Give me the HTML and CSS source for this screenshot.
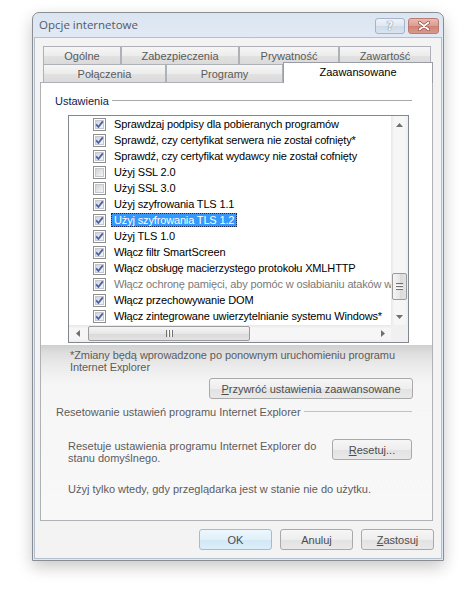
FILE: index.html
```html
<!DOCTYPE html>
<html lang="pl">
<head>
<meta charset="utf-8">
<title>Opcje internetowe</title>
<link rel="stylesheet" href="styles.css">
</head>
<body>
<svg class="defs" width="0" height="0" aria-hidden="true">
  <defs>
    <linearGradient id="cbg" x1="0" y1="0" x2="1" y2="1">
      <stop offset="0" stop-color="#cdd1d7"/>
      <stop offset="1" stop-color="#f7f7f7"/>
    </linearGradient>
    <symbol id="cb" viewBox="0 0 13 13">
      <rect x="0.5" y="0.5" width="12" height="12" fill="#fff" stroke="#8f8f8f"/>
      <rect x="2.5" y="2.5" width="8" height="8" fill="url(#cbg)" stroke="#c4c8ce"/>
    </symbol>
    <symbol id="ck" viewBox="0 0 13 13">
      <use href="#cb"/>
      <path d="M3.2 6.4 L5.4 9 L9.8 3.4" fill="none" stroke="#4a5fa3" stroke-width="1.7" stroke-linejoin="round"/>
    </symbol>
  </defs>
</svg>

<div class="window">
  <div class="titlebar">
    <span class="title">Opcje internetowe</span>
    <div class="caption-btns">
      <span class="cbtn help">?</span>
      <span class="cbtn close">
        <svg width="12" height="10" viewBox="0 0 12 10"><path d="M1.5 1.5 L10.5 8.5 M10.5 1.5 L1.5 8.5" stroke="#8a4a44" stroke-width="3.2" stroke-linecap="round"/><path d="M1.5 1.5 L10.5 8.5 M10.5 1.5 L1.5 8.5" stroke="#fff" stroke-width="1.8" stroke-linecap="round"/></svg>
      </span>
    </div>
  </div>

  <div class="client">
    <div class="tabs">
      <div class="tabrow">
        <div class="tab w-ogolne">Ogólne</div>
        <div class="tab w-zabez">Zabezpieczenia</div>
        <div class="tab w-pryw">Prywatność</div>
        <div class="tab w-zawart">Zawartość</div>
      </div>
      <div class="tabrow">
        <div class="tab w-polacz">Połączenia</div>
        <div class="tab w-prog">Programy</div>
        <div class="tab tab-sel w-zaaw">Zaawansowane</div>
      </div>
    </div>

    <div class="page">
      <div class="panel">
        <div class="group-label"><span class="gl-text navy">Ustawienia</span><span class="gl-line"></span></div>
        <div class="listbox">
          <div class="lb-main">
            <div class="items">
              <div class="item"><svg class="cb"><use href="#ck"/></svg><span class="lbl">Sprawdzaj podpisy dla pobieranych programów</span></div>
              <div class="item"><svg class="cb"><use href="#ck"/></svg><span class="lbl">Sprawdź, czy certyfikat serwera nie został cofnięty*</span></div>
              <div class="item"><svg class="cb"><use href="#ck"/></svg><span class="lbl">Sprawdź, czy certyfikat wydawcy nie został cofnięty</span></div>
              <div class="item"><svg class="cb"><use href="#cb"/></svg><span class="lbl">Użyj SSL 2.0</span></div>
              <div class="item"><svg class="cb"><use href="#cb"/></svg><span class="lbl">Użyj SSL 3.0</span></div>
              <div class="item"><svg class="cb"><use href="#ck"/></svg><span class="lbl">Użyj szyfrowania TLS 1.1</span></div>
              <div class="item"><svg class="cb"><use href="#ck"/></svg><span class="lbl sel">Użyj szyfrowania TLS 1.2</span></div>
              <div class="item"><svg class="cb"><use href="#ck"/></svg><span class="lbl">Użyj TLS 1.0</span></div>
              <div class="item"><svg class="cb"><use href="#ck"/></svg><span class="lbl">Włącz filtr SmartScreen</span></div>
              <div class="item"><svg class="cb"><use href="#ck"/></svg><span class="lbl">Włącz obsługę macierzystego protokołu XMLHTTP</span></div>
              <div class="item"><svg class="cb"><use href="#ck"/></svg><span class="lbl dis">Włącz ochronę pamięci, aby pomóc w osłabianiu ataków w</span></div>
              <div class="item"><svg class="cb"><use href="#ck"/></svg><span class="lbl">Włącz przechowywanie DOM</span></div>
              <div class="item"><svg class="cb"><use href="#ck"/></svg><span class="lbl">Włącz zintegrowane uwierzytelnianie systemu Windows*</span></div>
            </div>
            <div class="vscroll">
              <div class="arrow-btn"><svg width="7" height="4" viewBox="0 0 7 4"><path d="M0 4 L3.5 0 L7 4 Z" fill="#707070"/></svg></div>
              <div class="vtrack">
                <div class="vthumb"><span class="grip-v"></span></div>
              </div>
              <div class="arrow-btn"><svg width="7" height="4" viewBox="0 0 7 4"><path d="M0 0 L3.5 4 L7 0 Z" fill="#707070"/></svg></div>
            </div>
          </div>
          <div class="hscroll">
            <div class="arrow-btn-h"><svg width="4" height="7" viewBox="0 0 4 7"><path d="M4 0 L0 3.5 L4 7 Z" fill="#707070"/></svg></div>
            <div class="htrack">
              <div class="hthumb"><span class="grip-h"></span></div>
            </div>
            <div class="arrow-btn-h"><svg width="4" height="7" viewBox="0 0 4 7"><path d="M0 0 L4 3.5 L0 7 Z" fill="#707070"/></svg></div>
            <div class="corner"></div>
          </div>
        </div>
      </div>

      <div class="lower">
        <p class="note">*Zmiany będą wprowadzone po ponownym uruchomieniu programu<br>Internet Explorer</p>

        <div class="restore-row">
          <span class="btn btn-restore"><u>P</u>rzywróć ustawienia zaawansowane</span>
        </div>

        <div class="group-label gl-reset"><span class="gl-text">Resetowanie ustawień programu Internet Explorer</span><span class="gl-line"></span></div>

        <div class="reset-row">
          <p class="reset-text">Resetuje ustawienia programu Internet Explorer do<br>stanu domyślnego.</p>
          <span class="btn btn-reset"><u>R</u>esetuj...</span>
        </div>

        <p class="use-text">Użyj tylko wtedy, gdy przeglądarka jest w stanie nie do użytku.</p>
      </div>
    </div>

    <div class="buttons">
      <span class="btn btn-dlg btn-default">OK</span>
      <span class="btn btn-dlg">Anuluj</span>
      <span class="btn btn-dlg"><u>Z</u>astosuj</span>
    </div>
  </div>
</div>
</body>
</html>
```

FILE: styles.css
```css
* { box-sizing: border-box; }
html, body { margin: 0; padding: 0; }
body {
  width: 473px;
  height: 593px;
  overflow: hidden;
  background: #ffffff;
  font-family: "Liberation Sans", Arial, sans-serif;
  font-size: 11px;
  color: #5c5c5c;
}
.defs { position: absolute; width: 0; height: 0; overflow: hidden; }
p { margin: 0; }
u { text-decoration: underline; text-underline-offset: 1px; }

.window {
  margin: 12px 0 0 32px;
  width: 412px;
  height: 549px;
  border: 1px solid #8a8d92;
  border-radius: 7px 7px 0 0;
  background: linear-gradient(#dbe5f1, #e4ecf6 40px, #dfe9f5);
  box-shadow: 0 6px 16px rgba(0, 0, 0, 0.22);
  padding: 0 1px 1px 1px;
  display: flex;
  flex-direction: column;
}

.titlebar {
  height: 24px;
  display: flex;
  justify-content: space-between;
  align-items: flex-start;
  padding-left: 5px;
}
.title {
  font-family: "Open Sans", "Noto Sans", sans-serif;
  font-size: 11.5px;
  line-height: 24px;
  color: #52596a;
}
.caption-btns {
  display: flex;
  gap: 3px;
  margin-top: 5px;
  margin-right: 3px;
}
.cbtn {
  height: 16px;
  border-radius: 3px;
  display: flex;
  align-items: center;
  justify-content: center;
}
.help {
  width: 30px;
  border: 1px solid #a4b3c8;
  background: linear-gradient(#eef3f9, #dfe7f1 50%, #cfdbea 51%, #dae4f0);
  font-family: "DejaVu Sans", sans-serif;
  font-size: 12px;
  font-weight: bold;
  color: #f4f7fb;
  text-shadow: 0 0 1px #6b7a90, 0 0 1px #6b7a90;
  line-height: 14px;
}
.close {
  width: 31px;
  border: 1px solid #b97c73;
  background: linear-gradient(#e9b9b0, #dc9c90 50%, #cf8171 51%, #d9998b);
}

.client {
  flex: 1;
  border: 1px solid #b4bfcd;
  background: #f3f3f3;
  padding: 8px 0 0 5px;
  display: flex;
  flex-direction: column;
}

.tabs {
  display: flex;
  flex-direction: column;
  padding-left: 3px;
}
.tabrow {
  display: flex;
  height: 18px;
}
.tab {
  height: 18px;
  border: 1px solid #aeb1b6;
  border-bottom: none;
  background: linear-gradient(#f6f6f6, #ececec 50%, #e2e2e2 51%, #dadada);
  text-align: center;
  line-height: 16px;
  padding-top: 1px;
  color: #5a5a5a;
  white-space: nowrap;
}
.w-ogolne { width: 78px; }
.w-zabez { width: 118px; }
.w-pryw { width: 100px; }
.w-zawart { width: 92px; }
.w-polacz { width: 123px; }
.w-prog { width: 117px; }
.w-zaaw { width: 150px; }
.tab-sel {
  height: 21px;
  margin-top: -2px;
  position: relative;
  z-index: 2;
  background: #ffffff;
  border-color: #9a9da3;
  color: #000;
  line-height: 17px;
  padding-top: 1px;
}

.page {
  width: 393px;
  height: 439px;
  border: 1px solid #aeb1b6;
  background: #ffffff;
  display: flex;
  flex-direction: column;
}

.panel {
  height: 262px;
  padding-top: 5px;
  background: #ffffff;
  display: flex;
  flex-direction: column;
}

.lower {
  flex: 1;
  background: linear-gradient(#cfcfcf, #dedede 8px, #ececec 22px, #f6f6f6 40px, #f8f8f8);
}

.group-label {
  display: flex;
  align-items: flex-start;
  margin-top: 7px;
  padding-left: 14px;
  line-height: 13px;
  height: 13px;
}
.gl-text { white-space: nowrap; padding-right: 3px; }
.navy { color: #15194a; }
.gl-line {
  flex: 1;
  height: 1px;
  margin-top: 5px;
  margin-right: 20px;
  background: #a9a9a9;
}

.listbox {
  margin: 7px 0 0 27px;
  width: 341px;
  height: 228px;
  border: 1px solid #828790;
  background: #fff;
  display: flex;
  flex-direction: column;
}
.lb-main {
  display: flex;
  height: 209px;
}
.items {
  flex: 1;
  overflow: hidden;
  padding-left: 24px;
  color: #000;
  letter-spacing: -0.15px;
}
.item {
  display: flex;
  align-items: center;
  height: 16px;
  white-space: nowrap;
}
.cb {
  width: 13px;
  height: 13px;
  flex: none;
  margin-right: 5px;
}
.lbl {
  padding: 0 2px;
  line-height: 12px;
  border: 1px solid transparent;
}
.lbl.sel {
  background: #3399ff;
  color: #fff;
  border: 1px dotted #1c2a5a;
}
.lbl.dis { color: #7a7a7a; }

.vscroll {
  width: 17px;
  display: flex;
  flex-direction: column;
  background: linear-gradient(90deg, #e8e8e8, #f6f6f6 20%, #f6f6f6 80%, #ededed);
}
.arrow-btn {
  height: 17px;
  display: flex;
  align-items: center;
  justify-content: center;
}
.vtrack {
  flex: 1;
  display: flex;
  flex-direction: column;
  justify-content: flex-end;
  padding: 0 1px;
}
.vthumb {
  height: 27px;
  margin-bottom: 8px;
  border: 1px solid #9b9b9b;
  border-radius: 2px;
  background: linear-gradient(90deg, #f5f5f5, #e7e7e7 50%, #d9d9d9 51%, #e3e3e3);
  display: flex;
  align-items: center;
  justify-content: center;
}
.grip-v {
  width: 7px;
  height: 7px;
  background: repeating-linear-gradient(#555 0 1px, transparent 1px 2px, #fff 2px 3px);
  opacity: 0.8;
}

.hscroll {
  height: 17px;
  display: flex;
  background: linear-gradient(#e8e8e8, #f6f6f6 20%, #f6f6f6 80%, #ededed);
}
.arrow-btn-h {
  width: 17px;
  display: flex;
  align-items: center;
  justify-content: center;
}
.htrack {
  flex: 1;
  display: flex;
  padding: 1px 0;
}
.hthumb {
  width: 162px;
  margin-left: 2px;
  border: 1px solid #9b9b9b;
  border-radius: 2px;
  background: linear-gradient(#f5f5f5, #e7e7e7 50%, #d9d9d9 51%, #e3e3e3);
  display: flex;
  align-items: center;
  justify-content: center;
}
.grip-h {
  width: 7px;
  height: 7px;
  background: repeating-linear-gradient(90deg, #555 0 1px, transparent 1px 2px, #fff 2px 3px);
  opacity: 0.8;
}
.corner {
  width: 17px;
  background: #f0f0f0;
}

.note {
  margin: 4px 0 0 29px;
  line-height: 12px;
  letter-spacing: -0.08px;
}
.restore-row {
  display: flex;
  justify-content: flex-end;
  margin-top: 5px;
  padding-right: 19px;
}
.btn {
  display: flex;
  align-items: center;
  justify-content: center;
  height: 21px;
  border: 1px solid #a9a9a9;
  border-radius: 3px;
  background: linear-gradient(#f6f6f6, #eeeeee 50%, #e2e2e2 51%, #e9e9e9);
  color: #4c4c4c;
  white-space: nowrap;
}
.btn-restore { width: 204px; }
.gl-reset { margin-top: 7px; padding-left: 15px; }
.gl-reset .gl-line { margin-right: 20px; background: #c2c2c2; }

.reset-row {
  display: flex;
  justify-content: space-between;
  align-items: flex-start;
  margin-top: 21px;
  padding: 0 20px 0 27px;
}
.reset-text { line-height: 12px; }
.btn-reset { width: 80px; margin-top: -1px; }

.use-text {
  margin: 19px 0 0 27px;
  line-height: 12px;
}

.buttons {
  display: flex;
  justify-content: flex-end;
  gap: 8px;
  margin-top: 8px;
  padding-right: 7px;
}
.btn-dlg { width: 73px; }
.btn-default {
  border-color: #8fc2e6;
  background: linear-gradient(#eef7fc, #e1f0fa 50%, #d2e8f6 51%, #dceef9);
}
```
